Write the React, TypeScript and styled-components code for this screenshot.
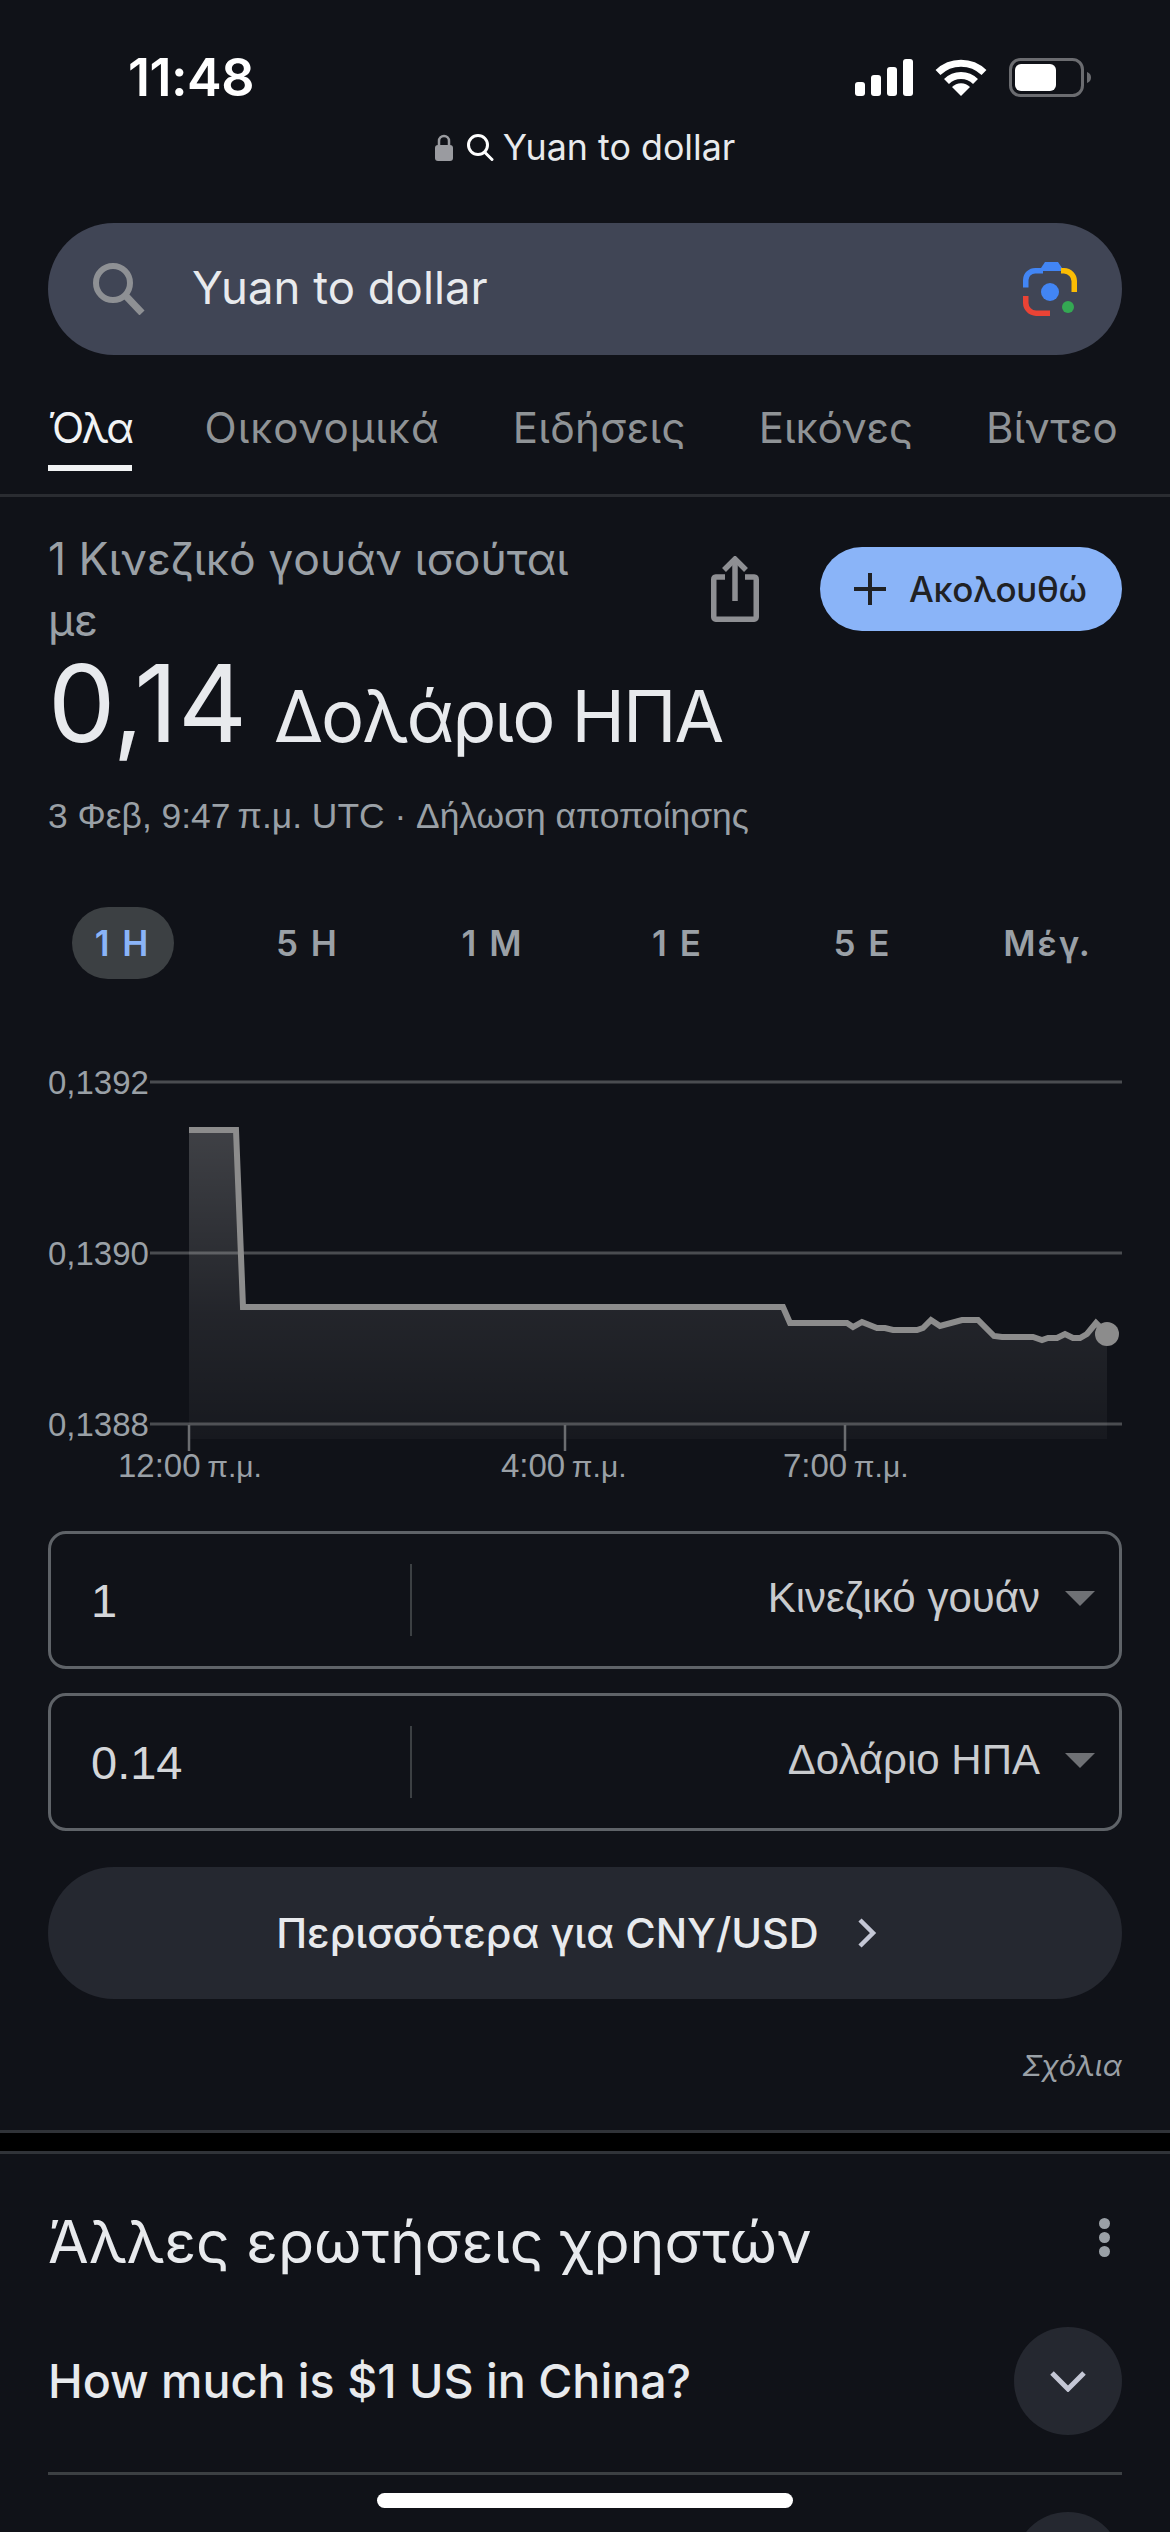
import styled, { createGlobalStyle } from 'styled-components';

const GlobalStyle = createGlobalStyle`
  html, body {
    margin: 0;
    padding: 0;
    background: #101218;
  }
  * {
    box-sizing: border-box;
  }
`;

const FONT = `Inter, "Noto Sans", sans-serif`;
const SYSTEM_FONT = `"Liberation Sans", Arial, sans-serif`;

const TABS = [
  { label: 'Όλα', spacing: -2.5 },
  { label: 'Οικονομικά', spacing: 1 },
  { label: 'Ειδήσεις', spacing: 0.3 },
  { label: 'Εικόνες', spacing: 0 },
  { label: 'Βίντεο', spacing: 0 },
];
const RANGES = ['1 H', '5 H', '1 M', '1 E', '5 E', 'Μέγ.'];

const LINE =
  'M189 1129 H236 L243 1306 H783 L790 1322 H847 L853 1326 L862 1321 L877 1327 H885 L893 1329 H917 L923 1327 L931 1319 L940 1325 L962 1319 H978 L994 1335 L1002 1336 H1033 L1042 1339 L1048 1337 H1057 L1065 1333 L1073 1337 H1080 L1087 1333 L1096 1322 L1107 1333';

const Chevron = () => (
  <svg width="36" height="22" viewBox="0 0 36 22" fill="none" stroke="#c4c7d5" strokeWidth="5">
    <path d="M2 3 L18 19 L34 3" />
  </svg>
);

const App = () => {
  return (
    <Page>
      <GlobalStyle />
      <StatusBar>
        <Clock>11:48</Clock>
        <StatusIcons>
          <svg width="58" height="37" viewBox="0 0 58 37" fill="#fff">
            <rect x="0" y="23" width="10" height="14" rx="3" />
            <rect x="16" y="16" width="10" height="21" rx="3" />
            <rect x="32" y="8" width="10" height="29" rx="3" />
            <rect x="48" y="0" width="10" height="37" rx="3" />
          </svg>
          <svg width="52" height="37" viewBox="0 0 52 37" fill="none">
            <path d="M3 13.5 A33 33 0 0 1 49 13.5" stroke="#fff" strokeWidth="7" />
            <path d="M11.5 22.5 A20.5 20.5 0 0 1 40.5 22.5" stroke="#fff" strokeWidth="7" />
            <path d="M26 37 L17 28 A12.5 12.5 0 0 1 35 28 Z" fill="#fff" />
          </svg>
          <svg width="83" height="39" viewBox="0 0 83 39">
            <rect x="1.5" y="1.5" width="72" height="36" rx="10" fill="none" stroke="#6b6c70" strokeWidth="3" />
            <rect x="6" y="6" width="41" height="27" rx="6" fill="#fff" />
            <path d="M78 14 C81 15 82 17 82 19.5 C82 22 81 24 78 25 Z" fill="#6b6c70" />
          </svg>
        </StatusIcons>
      </StatusBar>

      <AddressBar>
        <svg width="18" height="27" viewBox="0 0 18 27">
          <path d="M4 12 V7 A5 5 0 0 1 14 7 V12" fill="none" stroke="#9a9ba0" strokeWidth="2.5" />
          <rect x="0" y="11" width="18" height="16" rx="3" fill="#9a9ba0" />
        </svg>
        <svg width="28" height="28" viewBox="0 0 28 28" fill="none" stroke="#fff" strokeWidth="3">
          <circle cx="12" cy="12" r="9.5" />
          <path d="M18.5 19 L26 26.5" strokeLinecap="round" />
        </svg>
        <AddressText>Yuan to dollar</AddressText>
      </AddressBar>

      <SearchBar>
        <svg width="52" height="52" viewBox="0 0 52 52" fill="none" stroke="#8e9094">
          <circle cx="20" cy="20" r="17" strokeWidth="6" />
          <path d="M32 32 L49 50" strokeWidth="7" />
        </svg>
        <SearchText>Yuan to dollar</SearchText>
        <svg width="54" height="54" viewBox="0 0 54 54" fill="none" strokeWidth="5.5">
          <path d="M2.75 25.5 V18 A9.5 9.5 0 0 1 12.5 8.75 H20" stroke="#4285f4" />
          <path d="M16 9 L22 0 H35 L41 9 Z" fill="#4285f4" />
          <path d="M38 8.75 H41 A10.5 10.5 0 0 1 51.25 19.5 V30" stroke="#fbbc04" />
          <path d="M2.75 34 V41 A10.5 10.5 0 0 0 13 51.25 H27" stroke="#ea4335" />
          <circle cx="27" cy="30" r="9" fill="#4285f4" />
          <circle cx="45" cy="45" r="6" fill="#34a853" />
        </svg>
      </SearchBar>

      <TabBar>
        {TABS.map((tab, i) => (
          <Tab key={tab.label} $active={i === 0} $spacing={tab.spacing}>{tab.label}</Tab>
        ))}
      </TabBar>

      <Hero>
        <HeroTop>
          <HeroLabel>1 Κινεζικό γουάν ισούται με</HeroLabel>
          <HeroActions>
            <ShareIcon width="48" height="66" viewBox="0 0 48 66" fill="none" stroke="#8e8f93" strokeWidth="5.5">
              <path d="M14 21 H5 A2.5 2.5 0 0 0 2.75 23.5 V61 A2.5 2.5 0 0 0 5 63.25 H43 A2.5 2.5 0 0 0 45.25 61 V23.5 A2.5 2.5 0 0 0 43 21 H34" />
              <path d="M24 45 V5" />
              <path d="M13 14 L24 3 L35 14" />
            </ShareIcon>
            <FollowButton>
              <svg width="32" height="32" viewBox="0 0 32 32" stroke="#202124" strokeWidth="4">
                <path d="M16 0 V32 M0 16 H32" />
              </svg>
              Ακολουθώ
            </FollowButton>
          </HeroActions>
        </HeroTop>
        <ValueRow>
          <ValueNumber>0,14</ValueNumber>
          <ValueUnit>Δολάριο ΗΠΑ</ValueUnit>
        </ValueRow>
        <DateLine>3 Φεβ, 9:47{'\u2009'}π.μ. UTC · Δήλωση αποποίησης</DateLine>
      </Hero>

      <RangeRow>
        {RANGES.map((range, i) => (
          <RangeItem key={range} $active={i === 0}>{range}</RangeItem>
        ))}
      </RangeRow>

      <Chart width="1170" height="450" viewBox="0 1040 1170 450">
        <defs>
          <linearGradient id="area" x1="0" y1="1126" x2="0" y2="1438" gradientUnits="userSpaceOnUse">
            <stop offset="0" stopColor="#fff" stopOpacity="0.2" />
            <stop offset="0.6" stopColor="#fff" stopOpacity="0.08" />
            <stop offset="1" stopColor="#fff" stopOpacity="0.03" />
          </linearGradient>
        </defs>
        {[1081, 1252, 1423].map(y => (
          <line key={y} x1="150" x2="1122" y1={y} y2={y} stroke="#4a4c50" strokeWidth="3" />
        ))}
        <path d={`${LINE} V1438 H189 Z`} fill="url(#area)" />
        {[189, 565, 845].map(x => (
          <line key={x} x1={x} x2={x} y1="1424" y2="1450" stroke="#6b6d70" strokeWidth="2.5" />
        ))}
        <path d={LINE} fill="none" stroke="#8c8c8c" strokeWidth="6" />
        <circle cx="1107" cy="1333" r="12" fill="#8c8c8c" />
        <ChartText x="48" y="1093">0,1392</ChartText>
        <ChartText x="48" y="1264">0,1390</ChartText>
        <ChartText x="48" y="1435">0,1388</ChartText>
        <ChartText x="118" y="1476">12:00{'\u2009'}<TimeSuffix>π.μ.</TimeSuffix></ChartText>
        <ChartText x="501" y="1476">4:00{'\u2009'}<TimeSuffix>π.μ.</TimeSuffix></ChartText>
        <ChartText x="783" y="1476">7:00{'\u2009'}<TimeSuffix>π.μ.</TimeSuffix></ChartText>
      </Chart>

      <Converter>
        <ConverterBox>
          <AmountCell>1</AmountCell>
          <CurrencyCell>
            Κινεζικό γουάν
            <Caret />
          </CurrencyCell>
        </ConverterBox>
        <ConverterBox>
          <AmountCell>0.14</AmountCell>
          <CurrencyCell>
            Δολάριο ΗΠΑ
            <Caret />
          </CurrencyCell>
        </ConverterBox>
        <MoreButton>
          Περισσότερα για CNY/USD
          <svg width="20" height="30" viewBox="0 0 20 30" fill="none" stroke="#c4c7d5" strokeWidth="4.5">
            <path d="M3 2 L16 15 L3 28" />
          </svg>
        </MoreButton>
      </Converter>

      <Feedback>Σχόλια</Feedback>

      <SectionBreak />

      <Questions>
        <QuestionsHeader>
          <QuestionsTitle>Άλλες ερωτήσεις χρηστών</QuestionsTitle>
          <Dots>
            <i /><i /><i />
          </Dots>
        </QuestionsHeader>
        <QuestionRow>
          <QuestionText>How much is $1 US in China?</QuestionText>
          <ExpandButton>
            <Chevron />
          </ExpandButton>
        </QuestionRow>
        <QuestionRow>
          <span />
          <ExpandButton>
            <Chevron />
          </ExpandButton>
        </QuestionRow>
      </Questions>

      <HomeIndicator />
    </Page>
  );
};

export default App;

const Page = styled.div`
  position: relative;
  width: 1170px;
  height: 2532px;
  overflow: hidden;
  background: #101218;
  color: #e8eaed;
  font-family: ${FONT};
`;

const StatusBar = styled.div`
  display: flex;
  align-items: center;
  justify-content: space-between;
  height: 96px;
  padding: 58px 78px 0 128px;
`;

const Clock = styled.div`
  font-size: 52px;
  font-weight: 600;
  color: #fff;
  letter-spacing: -0.5px;
`;

const StatusIcons = styled.div`
  display: flex;
  align-items: center;
  gap: 22px;
`;

const AddressBar = styled.div`
  display: flex;
  align-items: center;
  justify-content: center;
  gap: 13px;
  height: 40px;
  margin-top: 31px;
`;

const AddressText = styled.span`
  font-size: 35.8px;
  color: #e8eaed;
  margin-left: -4px;
`;

const SearchBar = styled.div`
  display: flex;
  align-items: center;
  height: 132px;
  margin: 56px 48px 0;
  padding: 0 45px;
  border-radius: 66px;
  background: #404555;
`;

const SearchText = styled.span`
  flex: 1;
  margin-left: 47px;
  padding-bottom: 4px;
  font-size: 45.5px;
  color: #e8eaed;
`;

const TabBar = styled.div`
  display: flex;
  gap: 73px;
  height: 142px;
  padding: 48px 0 0 48px;
  overflow: hidden;
  border-bottom: 3px solid #2a2c31;
`;

const Tab = styled.div<{ $active?: boolean; $spacing: number }>`
  height: 68px;
  font-size: 42px;
  line-height: 50px;
  letter-spacing: ${props => props.$spacing}px;
  color: ${props => (props.$active ? '#f1f3f4' : '#8f9396')};
  border-bottom: 6px solid ${props => (props.$active ? '#f1f3f4' : 'transparent')};
  white-space: nowrap;
`;

const Hero = styled.div`
  padding: 32px 48px 0;
`;

const HeroTop = styled.div`
  display: flex;
  justify-content: space-between;
`;

const HeroLabel = styled.div`
  width: 560px;
  font-size: 44.5px;
  line-height: 61px;
  color: #9aa0a6;
`;

const HeroActions = styled.div`
  display: flex;
  align-items: flex-start;
  gap: 61px;
  padding-top: 18px;
`;

const ShareIcon = styled.svg`
  flex-shrink: 0;
  margin-top: 9px;
`;

const FollowButton = styled.div`
  display: flex;
  align-items: center;
  gap: 23px;
  height: 84px;
  width: 302px;
  padding-left: 34px;
  border-radius: 42px;
  background: #8ab4f8;
  color: #202124;
  font-size: 35px;
  letter-spacing: -0.3px;
  font-weight: 500;
`;

const ValueRow = styled.div`
  display: flex;
  align-items: baseline;
  gap: 27px;
  height: 104px;
  line-height: 104px;
`;

const ValueNumber = styled.span`
  font-size: 107px;
  color: #e8eaed;
`;

const ValueUnit = styled.span`
  font-size: 72px;
  letter-spacing: -2px;
  color: #e8eaed;
`;

const DateLine = styled.div`
  margin-top: 39px;
  font-family: ${SYSTEM_FONT};
  font-size: 35.4px;
  line-height: 44px;
  color: #9aa0a6;
`;

const RangeRow = styled.div`
  display: grid;
  grid-template-columns: repeat(6, 185px);
  height: 72px;
  margin-top: 69px;
  padding-left: 30px;
`;

const RangeItem = styled.div<{ $active?: boolean }>`
  justify-self: center;
  display: flex;
  align-items: center;
  justify-content: center;
  width: 102px;
  height: 72px;
  border-radius: 36px;
  font-size: 35px;
  font-weight: 600;
  letter-spacing: 2px;
  white-space: nowrap;
  background: ${props => (props.$active ? '#3c4043' : 'transparent')};
  color: ${props => (props.$active ? '#8ab4f8' : '#9aa0a6')};
`;

const Chart = styled.svg`
  display: block;
  margin-top: 62px;
`;

const ChartText = styled.text`
  font-family: ${SYSTEM_FONT};
  font-size: 33px;
  fill: #9aa0a6;
`;

const TimeSuffix = styled.tspan`
  font-size: 30px;
`;

const Converter = styled.div`
  display: flex;
  flex-direction: column;
  gap: 24px;
  margin-top: 40px;
  padding: 0 48px;
`;

const ConverterBox = styled.div`
  display: flex;
  align-items: center;
  height: 138px;
  border: 3px solid #5f6368;
  border-radius: 18px;
`;

const AmountCell = styled.div`
  display: flex;
  align-items: center;
  width: 361px;
  height: 72px;
  padding-left: 40px;
  border-right: 2px solid #3c4043;
  font-family: ${SYSTEM_FONT};
  font-size: 47px;
  color: #d4d6d9;
`;

const CurrencyCell = styled.div`
  flex: 1;
  display: flex;
  align-items: center;
  justify-content: flex-end;
  gap: 25px;
  padding: 0 24px 4px 0;
  font-family: ${SYSTEM_FONT};
  font-size: 42px;
  color: #c9cbce;
`;

const Caret = styled.span`
  width: 0;
  height: 0;
  border-left: 15px solid transparent;
  border-right: 15px solid transparent;
  border-top: 15px solid #6f7175;
`;

const MoreButton = styled.div`
  display: flex;
  align-items: center;
  justify-content: center;
  gap: 38px;
  height: 132px;
  margin-top: 12px;
  padding-right: 17px;
  border-radius: 66px;
  background: #252830;
  color: #e8eaed;
  font-size: 41.5px;
  font-weight: 500;
`;

const Feedback = styled.div`
  margin-top: 47px;
  padding-right: 48px;
  text-align: right;
  font-size: 29px;
  line-height: 40px;
  font-style: italic;
  color: #9aa0a6;
`;

const SectionBreak = styled.div`
  height: 24px;
  margin-top: 44px;
  background: #000;
  border-top: 3px solid #303338;
  border-bottom: 3px solid #303338;
`;

const Questions = styled.div`
  padding: 0 48px;
`;

const QuestionsHeader = styled.div`
  display: flex;
  align-items: flex-start;
  justify-content: space-between;
  height: 136px;
  padding: 46px 12px 0 0;
`;

const QuestionsTitle = styled.h2`
  margin: 0;
  font-size: 59px;
  line-height: 84px;
  font-weight: 400;
  color: #e8eaed;
`;

const Dots = styled.div`
  display: flex;
  flex-direction: column;
  gap: 3px;
  margin-top: 18px;

  i {
    display: block;
    width: 11px;
    height: 11px;
    border-radius: 50%;
    background: #9aa0a6;
  }
`;

const QuestionRow = styled.div`
  display: flex;
  align-items: center;
  justify-content: space-between;
  height: 185px;
  border-bottom: 3px solid #3c4043;
`;

const QuestionText = styled.div`
  font-size: 46.6px;
  font-weight: 500;
  color: #e8eaed;
`;

const ExpandButton = styled.div`
  display: flex;
  align-items: center;
  justify-content: center;
  width: 108px;
  height: 108px;
  border-radius: 50%;
  background: #252830;
`;

const HomeIndicator = styled.div`
  position: absolute;
  left: 377px;
  bottom: 24px;
  width: 416px;
  height: 15px;
  border-radius: 8px;
  background: #fff;
`;
